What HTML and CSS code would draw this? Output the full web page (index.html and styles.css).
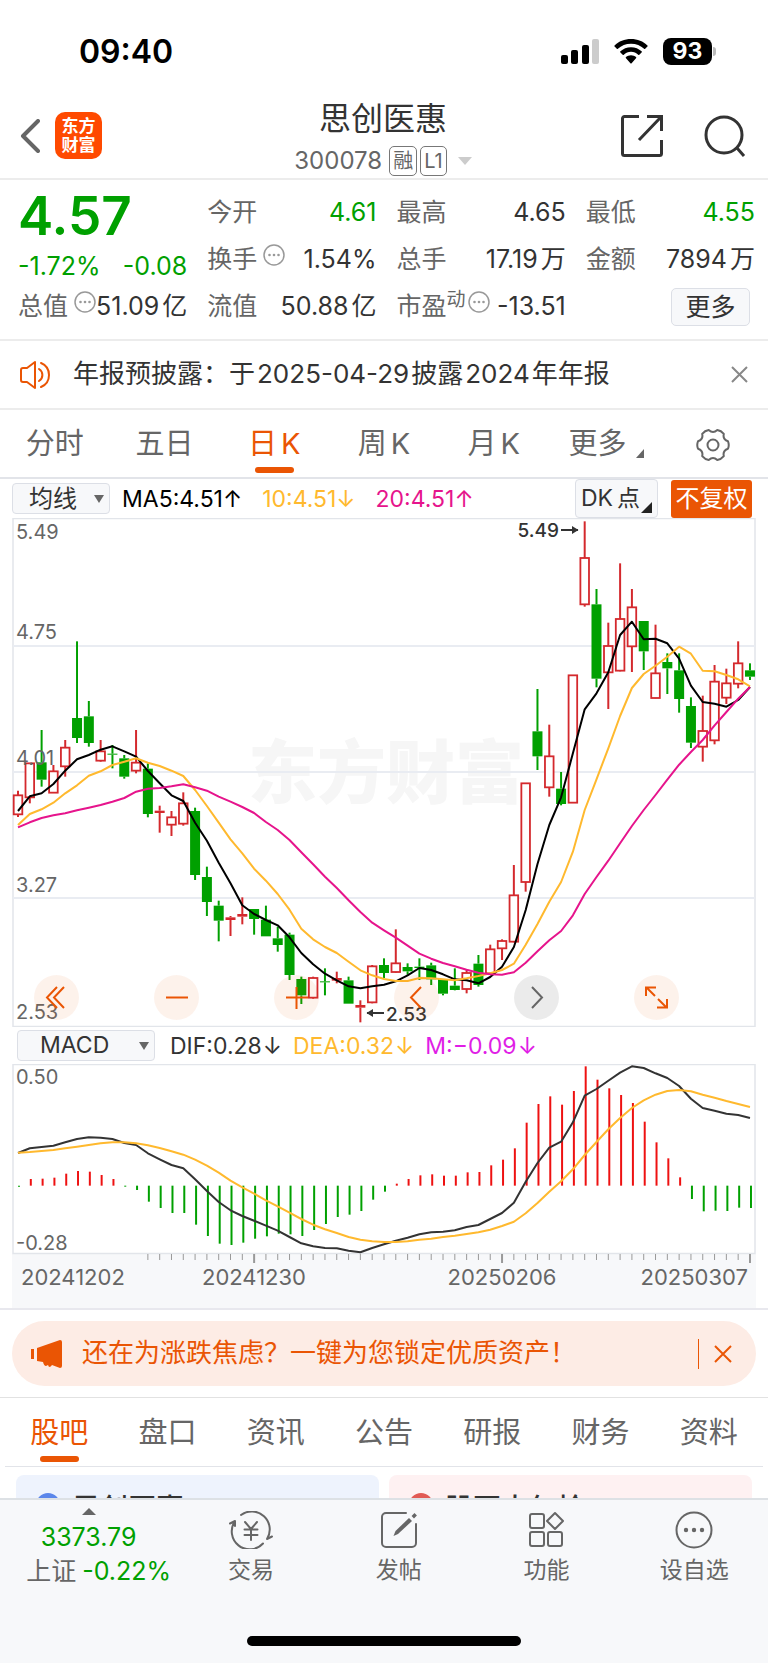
FILE: index.html
```html
<!DOCTYPE html>
<html lang="zh-CN">
<head>
<meta charset="utf-8">
<meta name="viewport" content="width=device-width, initial-scale=1">
<title>思创医惠 300078</title>
<link rel="stylesheet" href="styles.css">
</head>
<body>
<div class="app">
  <main class="content">
    <div class="status">
      <time class="status-time">09:40</time>
      <div class="status-icons">
        <svg width="38" height="25" viewBox="0 0 38 25" aria-label="信号">
          <rect x="0" y="16" width="7" height="9" rx="2"/><rect x="10" y="11" width="7" height="14" rx="2"/>
          <rect x="21" y="6" width="7" height="19" rx="2"/><rect x="31" y="0" width="7" height="25" rx="2" fill="#ccc"/>
        </svg>
        <svg width="34" height="25" viewBox="0 0 34 25" aria-label="Wi-Fi">
          <path d="M17 0C10.500 0 4.700 2.400.6 6.400a.8.8 0 0 0 0 1.200l2.200 2.200a.8.800 0 0 0 1.100 0C7.300 6.600 11.900 4.700 17 4.700s9.700 1.900 13.100 5.100a.8.800 0 0 0 1.100 0l2.200-2.200a.8.800 0 0 0 0-1.200C29.300 2.400 23.500 0 17 0z"/>
          <path d="M17 8.200c-4.100 0-7.900 1.600-10.600 4.100a.8.800 0 0 0 0 1.200l2.300 2.200a.8.800 0 0 0 1.100 0c1.900-1.800 4.400-2.900 7.200-2.900s5.300 1.100 7.200 2.900a.8.800 0 0 0 1.100 0l2.300-2.200a.8.800 0 0 0 0-1.200C24.900 9.800 21.100 8.200 17 8.200z"/>
          <path d="M17 16.200c-1.900 0-3.700.7-5 1.900a.8.800 0 0 0 0 1.200l4.400 4.900a.8.800 0 0 0 1.200 0l4.400-4.900a.8.800 0 0 0 0-1.200c-1.300-1.200-3.100-1.900-5-1.900z"/>
        </svg>
        <div class="battery"><span class="battery-level">93</span><span class="battery-tip"></span></div>
      </div>
    </div>

    <header class="topbar">
      <div class="topbar-left">
        <button class="icon-button" aria-label="返回">
          <svg width="20" height="34" viewBox="0 0 20 34"><path d="M18 2 3 17l15 15" fill="none" stroke="#666" stroke-width="4" stroke-linecap="round" stroke-linejoin="round"/></svg>
        </button>
        <div class="logo"><span>东方</span><span>财富</span></div>
      </div>
      <div class="topbar-title">
        <h1 class="stock-name">思创医惠</h1>
        <div class="stock-code"><span>300078</span><span class="tag tag-first">融</span><span class="tag">L1</span>
          <svg class="code-caret" width="14" height="8" viewBox="0 0 14 8"><path d="M0 0h14L7 8z" fill="#ccc"/></svg>
        </div>
      </div>
      <div class="topbar-right">
        <button class="icon-button" aria-label="分享">
          <svg width="44" height="44" viewBox="0 0 44 44" fill="none" stroke="#333" stroke-width="3"><path d="M19 2.500H4.500a2 2 0 0 0-2 2v35a2 2 0 0 0 2 2h35a2 2 0 0 0 2-2V26M27 2.500h14.500V17M41 3 19 26"/></svg>
        </button>
        <button class="icon-button" aria-label="搜索">
          <svg width="42" height="44" viewBox="0 0 42 44" fill="none" stroke="#333" stroke-width="3"><circle cx="20" cy="21" r="18"/><path d="m33 34 7 8"/></svg>
        </button>
      </div>
    </header>

    <section class="quote">
      <div class="price">4.57</div>
      <div class="field"><span class="name">今开</span><span class="value down">4.61</span></div>
      <div class="field"><span class="name">最高</span><span class="value">4.65</span></div>
      <div class="field"><span class="name">最低</span><span class="value down">4.55</span></div>
      <div class="field change"><span class="value down">-1.72%</span><span class="value down">-0.08</span></div>
      <div class="field"><span class="name">换手</span><svg class="info" viewBox="0 0 22 22"><use href="#info"/></svg><span class="value">1.54%</span></div>
      <div class="field"><span class="name">总手</span><span class="value">17.19<span class="unit">万</span></span></div>
      <div class="field"><span class="name">金额</span><span class="value">7894<span class="unit">万</span></span></div>
      <div class="field"><span class="name">总值</span><svg class="info" viewBox="0 0 22 22"><use href="#info"/></svg><span class="value">51.09<span class="unit">亿</span></span></div>
      <div class="field"><span class="name">流值</span><span class="value">50.88<span class="unit">亿</span></span></div>
      <div class="field"><span class="name">市盈<sup class="dyn">动</sup></span><svg class="info info-tight" viewBox="0 0 22 22"><use href="#info"/></svg><span class="value">-13.51</span></div>
      <div class="field more-cell"><button class="more">更多</button></div>
    </section>

    <section class="notice">
      <svg width="33" height="28" viewBox="0 0 33 28" fill="none" stroke="#ea5504" stroke-width="2" stroke-linejoin="round"><path d="M1 9v10q0 2 2 2h4l8 6V1L7 7H3Q1 7 1 9z"/><path d="M19 8a7 7 0 0 1 0 12M21 2a13 13 0 0 1 0 24" stroke-linecap="round"/></svg>
      <p class="notice-text">年报预披露：于<span class="num">2025-04-29</span>披露<span class="num">2024</span>年年报</p>
      <button class="icon-button" aria-label="关闭公告"><svg width="17" height="17" viewBox="0 0 17 17"><path d="m1 1 15 15M16 1 1 16" stroke="#888" stroke-width="2"/></svg></button>
    </section>

    <nav class="tabs periods">
      <button class="tab">分时</button>
      <button class="tab">五日</button>
      <button class="tab active">日<span class="num-end">K</span></button>
      <button class="tab">周<span class="num-end">K</span></button>
      <button class="tab">月<span class="num-end">K</span></button>
      <button class="tab tab-more">更多<svg class="corner" width="8" height="9" viewBox="0 0 8 9"><path d="M8 0v9H0z" fill="#666"/></svg></button>
      <button class="tab" aria-label="设置">
        <svg width="34" height="34" viewBox="0 0 34 34" fill="none" stroke="#666" stroke-width="2" stroke-linejoin="round"><path d="M32 13.300Q33.500 17 32 20.700 26.500 22.500 27.800 28.100 25.200 31.300 21.300 31.900 17 28 12.700 31.900 8.800 31.300 6.200 28.100 7.500 22.500 2 20.700.5 17 2 13.300 7.500 11.500 6.200 5.900 8.800 2.700 12.700 2.100 17 6 21.300 2.100 25.200 2.700 27.800 5.900 26.500 11.500 32 13.300z"/><circle cx="17" cy="17" r="5.500"/></svg>
      </button>
    </nav>

    <section class="toolbar">
      <label class="picker picker-ma"><select aria-label="主图指标"><option>均线</option></select></label>
      <span class="ma ma5">MA5:4.51↑</span>
      <span class="ma ma10">10:4.51↓</span>
      <span class="ma ma20">20:4.51↑</span>
      <button class="dk">DK<span class="unit">点</span></button>
      <button class="adjust">不复权</button>
    </section>

    <section class="chart">
      <svg id="kline" class="plot" viewBox="0 0 744 509" role="img" aria-label="日K线"></svg>
      <div class="chart-tools">
        <button class="tool" aria-label="最早"><svg viewBox="0 0 45 45"><path d="M23 12 13 22.500 23 33M30 12 20 22.500 30 33"/></svg></button>
        <button class="tool" aria-label="缩小"><svg viewBox="0 0 45 45"><path d="M12 22.500h22"/></svg></button>
        <button class="tool" aria-label="放大"><svg viewBox="0 0 45 45"><path d="M12 22.500h22M22.500 12v22"/></svg></button>
        <button class="tool" aria-label="后退"><svg viewBox="0 0 45 45"><path d="M27 12 17 22.500 27 33"/></svg></button>
        <button class="tool tool-gray" aria-label="前进"><svg viewBox="0 0 45 45"><path d="M18 12l10 10.500L18 33"/></svg></button>
        <button class="tool" aria-label="全屏"><svg viewBox="0 0 45 45"><path d="M12 21v-8.500h10M13 13l8 8M33 24v8.500H23M32 32l-8-8"/></svg></button>
      </div>
    </section>

    <section class="toolbar toolbar-macd">
      <label class="picker picker-macd"><select aria-label="副图指标"><option>MACD</option></select></label>
      <span class="ma dif">DIF:0.28<span class="arrow">↓</span></span>
      <span class="ma ma10">DEA:0.32<span class="arrow">↓</span></span>
      <span class="ma macd">M:−0.09<span class="arrow">↓</span></span>
    </section>

    <section class="chart chart-macd">
      <svg id="macd" class="plot" viewBox="0 0 744 244" role="img" aria-label="MACD"></svg>
    </section>

    <section class="promo-wrap">
      <div class="promo">
        <svg width="31" height="28" viewBox="0 0 31 28" fill="#ea5504"><path d="M0 9h3v10H0zM6 8 29 0q2 0 2 2v24q0 2-2 2l-8-3q-1 2-3 2l-1-2-2 1q-2 0-3-4l-6-1z"/></svg>
        <a class="promo-text" href="#">还在为涨跌焦虑？一键为您锁定优质资产！</a>
        <span class="promo-rule"></span>
        <button class="icon-button" aria-label="关闭"><svg width="18" height="18" viewBox="0 0 18 18"><path d="m1 1 16 16M17 1 1 17" stroke="#ea5504" stroke-width="2"/></svg></button>
      </div>
    </section>

    <nav class="tabs sections">
      <button class="tab active">股吧</button>
      <button class="tab">盘口</button>
      <button class="tab">资讯</button>
      <button class="tab">公告</button>
      <button class="tab">研报</button>
      <button class="tab">财务</button>
      <button class="tab">资料</button>
    </nav>

    <section class="feed">
      <a class="card card-blue" href="#"><span class="dot"></span>思创医惠</a>
      <a class="card card-red" href="#"><span class="dot"></span>股票大年抢</a>
    </section>
  </main>

  <footer class="bottom">
    <div class="bottom-row">
      <a class="index" href="#">
        <svg width="14" height="7" viewBox="0 0 14 7"><path d="M0 7h14L7 0z" fill="#666"/></svg>
        <span class="down">3373.79</span>
        <span class="index-name">上证<span class="down">-0.22%</span></span>
      </a>
      <button class="action">
        <svg width="44" height="38" viewBox="0 0 44 38" fill="none" stroke="#666" stroke-width="2" stroke-linecap="round" stroke-linejoin="round"><path d="M12 4A18 18 0 0 1 38 28l5-2.500M34 32.500A18 18 0 0 1 6 10l-5 2.500M6 10v5"/><path d="m16 11 6 7 6-7M22 18v11M15.500 18.500h13M15.500 24h13"/></svg>
        <span>交易</span>
      </button>
      <button class="action">
        <svg width="38" height="38" viewBox="0 0 38 38" fill="none" stroke="#666" stroke-width="2" stroke-linecap="round"><path d="M26 2H6a4 4 0 0 0-4 4v26a4 4 0 0 0 4 4h26a4 4 0 0 0 4-4V13"/><path d="m13.500 25 2-5L29 7l3 3-14 13z" fill="#666" stroke="none"/><path d="m33 5 1.500-1.500 1 1L34 6z" fill="#666"/></svg>
        <span>发帖</span>
      </button>
      <button class="action">
        <svg width="38" height="38" viewBox="0 0 38 38" fill="none" stroke="#666" stroke-width="2" stroke-linejoin="round"><rect x="3" y="3" width="14" height="14" rx="2"/><rect x="3" y="21" width="14" height="14" rx="2"/><rect x="21" y="21" width="14" height="14" rx="2"/><path d="m28 2 8 8-8 8-8-8z"/></svg>
        <span>功能</span>
      </button>
      <button class="action">
        <svg width="38" height="38" viewBox="0 0 38 38"><circle cx="19" cy="19" r="17.500" fill="none" stroke="#666" stroke-width="2"/><g fill="#666"><circle cx="11" cy="19" r="2.200"/><circle cx="19" cy="19" r="2.200"/><circle cx="27" cy="19" r="2.200"/></g></svg>
        <span>设自选</span>
      </button>
    </div>
    <div class="home-bar"></div>
  </footer>
</div>

<svg width="0" height="0" class="defs" aria-hidden="true">
  <symbol id="info" viewBox="0 0 22 22"><circle cx="11" cy="11" r="10" fill="none" stroke="#999" stroke-width="1.500"/><g fill="#999"><circle cx="6.500" cy="11" r="1.300"/><circle cx="11" cy="11" r="1.300"/><circle cx="15.500" cy="11" r="1.300"/></g></symbol>
</svg>
<script src="chart.js"></script>
</body>
</html>
```

FILE: styles.css
```css
* { box-sizing: border-box; }

body {
  margin: 0;
  background: #fff;
  color: #333;
  font-family: Inter, "Noto Sans CJK SC", sans-serif;
  font-size: 24px;
  line-height: 1.25;
}

button, select {
  margin: 0;
  padding: 0;
  border: 0;
  background: none;
  color: inherit;
  font: inherit;
}

a { color: inherit; text-decoration: none; }
h1, p { margin: 0; font-weight: 400; }
svg { display: block; flex: none; }
.defs { position: absolute; }
.down { color: #00a000; }
.unit, .num-end { margin-left: 4px; }
.num { margin: 0 2px; }
.icon-button { display: flex; }

.app { display: flex; flex-direction: column; height: 100vh; }
.content { flex: 1; min-height: 0; overflow-y: auto; scrollbar-width: none; }

/* status bar */
.status {
  display: flex;
  align-items: center;
  justify-content: space-between;
  height: 91px;
  padding: 12px 52px 0 79px;
  color: #000;
}
.status-time { font-size: 32px; font-weight: 600; }
.status-icons { display: flex; align-items: center; gap: 15px; }
.battery { display: flex; align-items: center; gap: 1px; }
.battery-level {
  width: 49px;
  border-radius: 8px;
  background: #000;
  color: #fff;
  font-size: 23px;
  font-weight: 700;
  line-height: 27px;
  text-align: center;
}
.battery-tip { width: 3px; height: 9px; border-radius: 0 4px 4px 0; background: #bbb; }

/* header */
.topbar {
  display: grid;
  grid-template-columns: 1fr auto 1fr;
  align-items: center;
  height: 89px;
  padding: 2px 22px 0 20px;
  border-bottom: 2px solid #ececec;
}
.topbar-left { display: flex; align-items: center; gap: 15px; }
.logo {
  display: flex;
  flex-direction: column;
  align-items: center;
  justify-content: center;
  width: 47px;
  height: 47px;
  border-radius: 10px;
  background: #ff4a00;
  color: #fff;
  font-size: 17px;
  font-weight: 700;
  line-height: 19px;
}
.topbar-title { display: flex; flex-direction: column; align-items: center; }
.stock-name { font-size: 32px; line-height: 50px; }
.stock-code { display: flex; align-items: center; gap: 3px; color: #666; font-size: 24px; line-height: 34px; }
.tag {
  min-width: 26px;
  padding: 0 3px;
  border: 1px solid #777;
  border-radius: 5px;
  font-size: 20px;
  line-height: 28px;
  text-align: center;
}
.tag-first { margin-left: 4px; }
.code-caret { margin-left: 8px; }
.topbar-right { display: flex; justify-content: flex-end; gap: 40px; }

/* quote */
.quote {
  display: grid;
  grid-template-columns: repeat(4, 1fr);
  grid-auto-rows: 47px;
  column-gap: 20px;
  padding: 9px 13px 9px 18px;
  border-bottom: 2px solid #ececec;
}
.price { color: #00a000; font-size: 53px; font-weight: 600; line-height: 54px; }
.field { display: flex; align-items: center; font-size: 25px; white-space: nowrap; }
.field .name { color: #666; }
.field .value { margin-left: auto; }
.change { padding-top: 14px; }
.change .value:first-child { margin-left: 0; }
.field .unit { margin-left: 3px; }
.info { width: 22px; height: 22px; margin: -10px -5px 0 6px; }
.info-tight { margin: -10px -5px 0 2px; }
.dyn { font-size: 19px; line-height: 1; vertical-align: 9px; }
.more-cell { justify-content: flex-end; padding-right: 5px; }
.more {
  width: 79px;
  height: 38px;
  border: 1px solid #dcdfe6;
  border-radius: 5px;
  background: #f7f8fa;
  line-height: 34px;
}

/* notice */
.notice { display: flex; align-items: center; height: 69px; padding: 0 20px; border-bottom: 2px solid #ececec; }
.notice-text { flex: 1; margin-left: 20px; font-size: 26px; }

/* tabs */
.tabs { display: grid; grid-template-columns: repeat(7, 1fr); height: 69px; border-bottom: 2px solid #e2e4e9; }
.tab {
  position: relative;
  display: flex;
  align-items: center;
  justify-content: center;
  padding-top: 2px;
  color: #666;
  font-size: 29px;
}
.active { color: #ea5504; }
.active::after {
  content: "";
  position: absolute;
  bottom: 4px;
  left: 50%;
  width: 39px;
  height: 6px;
  margin-left: -19px;
  border-radius: 3px;
  background: #ea5504;
}
.tab-more { padding-left: 6px; }
.corner { margin: 18px 0 0 10px; }
.sections { margin: 0 5px; border-bottom-width: 1px; }

/* indicator toolbar */
.toolbar { display: flex; align-items: center; height: 39px; padding: 0 16px 0 12px; white-space: nowrap; }
.picker {
  position: relative;
  display: flex;
  height: 31px;
  border: 1px solid #dcdfe6;
  border-radius: 4px;
  background: #f7f8fa;
}
.picker::after {
  content: "";
  position: absolute;
  top: 11px;
  right: 5px;
  border: 5px solid transparent;
  border-top: 8px solid #666;
  border-bottom: 0;
}
.picker select { width: 100%; padding: 0 20px 0 16px; appearance: none; }
.picker-ma { width: 98px; margin-right: 12px; font-size: 24px; line-height: 29px; }
.picker-macd { width: 138px; margin-right: 15px; font-size: 23px; }
.picker-macd select { padding-left: 22px; }
.ma { margin-right: 20px; padding-top: 2px; font-size: 23px; }
.ma5 { color: #000; }
.ma10 { color: #ffb92e; }
.ma20 { color: #e6148c; }
.macd { color: #e01ee6; }
.arrow { margin-left: 1px; }
.dk {
  position: relative;
  height: 39px;
  width: 83px;
  margin-left: auto;
  padding-right: 12px;
  border: 1px solid #dcdfe6;
  border-radius: 4px;
  background: #f7f8fa;
  font-size: 23px;
}
.dk::after {
  content: "";
  position: absolute;
  right: 5px;
  bottom: 4px;
  border-bottom: 11px solid #222;
  border-left: 11px solid transparent;
}
.adjust { width: 81px; height: 38px; margin-left: 13px; border-radius: 3px; background: #ea5504; color: #fff; font-size: 24px; }
.toolbar-macd { height: 37px; padding-left: 17px; }
.toolbar-macd .ma { margin-right: 11px; }

/* charts */
.chart { position: relative; padding: 0 12px; }
.chart-macd { border-bottom: 2px solid #e8e8ee; }
.plot { width: 100%; height: auto; }
.plot text { fill: #666; font-size: 20px; }
.plot .date { font-size: 22px; }
.plot .note { fill: #333; font-size: 19px; font-weight: 500; }
.plot .watermark { fill: #f6f6f6; font-size: 69px; font-weight: 900; }
.chart-tools {
  position: absolute;
  right: 89px;
  bottom: 7px;
  left: 34px;
  display: flex;
  justify-content: space-between;
}
.tool { width: 45px; height: 45px; border-radius: 50%; background: rgba(234, 85, 4, .08); }
.tool path { fill: none; stroke: #ea5504; stroke-width: 2; }
.tool-gray { background: rgba(0, 0, 0, .08); }
.tool-gray path { stroke: #666; }

/* promo */
.promo-wrap { padding: 11px 12px; border-bottom: 1px solid #e2e2e2; }
.promo {
  display: flex;
  align-items: center;
  height: 65px;
  padding: 0 24px 0 19px;
  border-radius: 33px;
  background: #fdece5;
  color: #ea5504;
}
.promo-text { flex: 1; margin-left: 20px; font-size: 26px; }
.promo-rule { width: 1px; height: 30px; margin-right: 15px; background: #ea5504; }

/* feed */
.feed { display: grid; grid-template-columns: 1fr 1fr; gap: 10px; padding: 8px 16px 20px; }
.card {
  display: flex;
  align-items: flex-start;
  gap: 12px;
  height: 120px;
  padding: 16px 20px;
  border-radius: 8px;
  font-size: 28px;
  font-weight: 500;
  line-height: 36px;
}
.card-blue { background: #eef3fd; }
.card-red { background: #fef1f2; }
.dot { width: 24px; height: 24px; margin-top: 2px; border-radius: 50%; background: #5b86ea; }
.card-red .dot { background: #e15a54; }

/* bottom bar */
.bottom { flex: none; height: 165px; border-top: 2px solid #dde1e5; background: #f7f8fa; color: #666; }
.bottom-row { display: grid; grid-template-columns: 6fr 5fr 5fr 5fr 5fr; height: 136px; }
.index { display: flex; flex-direction: column; align-items: center; padding-top: 8px; font-size: 25px; line-height: 34px; }
.index > .down { margin-top: 5px; }
.index-name { padding-left: 20px; }
.index-name .down { margin-left: 6px; }
.action { display: flex; flex-direction: column; align-items: center; padding-top: 11px; font-size: 23px; line-height: 30px; }
.action span { margin-top: 6px; }
.home-bar { width: 274px; height: 10px; margin: 0 auto; border-radius: 5px; background: #000; }
```

FILE: chart.js
```js
const STEP = 11.806;
const xAt = (i) => 6 + STEP * i;

// Each candle: direction, high, body top, body bottom, low (thirds of a unit, downward).
const candles = [
  ["r",842,856,913,921],["r",760,760,862,880],["g",660,757,809,830],["r",765,784,848,848],
  ["r",690,713,769,800],["g",394,624,684,699],["g",573,619,699,710],["r",690,724,752,755],
  ["g",705,731,734,775],["g",735,745,800,806],["r",660,758,782,790],["g",760,776,912,922],
  ["r",887,902,909,968],["r",903,922,944,978],["r",847,880,941,947],["g",893,903,1095,1110],
  ["g",1070,1101,1176,1218],["g",1172,1187,1232,1294],["r",1218,1222,1230,1278],["r",1162,1212,1220,1243],
  ["g",1197,1197,1227,1274],["g",1187,1229,1279,1279],["g",1250,1285,1305,1325],["g",1268,1274,1395,1410],
  ["g",1400,1407,1456,1482],["r",1400,1404,1463,1466],["g",1375,1414,1417,1456],["r",1385,1404,1412,1420],
  ["g",1400,1411,1481,1481],["r",1471,1485,1493,1537],["r",1365,1369,1477,1480],["g",1345,1365,1389,1404],
  ["r",1258,1360,1386,1388],["g",1360,1371,1384,1394],["g",1345,1370,1374,1410],["g",1358,1366,1408,1425],
  ["g",1407,1407,1451,1456],["g",1375,1427,1440,1441],["r",1378,1389,1437,1450],["g",1335,1361,1425,1430],
  ["r",1304,1318,1390,1395],["r",1288,1293,1315,1350],["r",1065,1156,1295,1297],["r",820,820,1116,1145],
  ["g",537,664,739,780],["r",644,739,832,860],["g",786,836,882,886],["r",496,496,878,878],
  ["r",34,144,283,290],["g",237,283,506,532],["r",338,408,487,597],["r",160,327,482,484],
  ["r",237,292,409,486],["g",333,333,424,480],["r",344,490,564,565],["g",430,456,475,552],
  ["g",430,481,567,608],["g",562,588,698,714],["r",557,663,710,755],["r",465,515,691,703],
  ["r",476,520,563,582],["r",394,460,521,535],["g",460,481,500,510]
];
const ma5 = [903,859,850,822,782,748,735,719,709,724,740,783,820,856,873,938,992,1058,1120,1186,1212,1230,1246,1282,1329,1363,1391,1411,1429,1435,1429,1424,1414,1396,1374,1380,1393,1408,1411,1420,1401,1370,1311,1200,1062,945,862,730,598,550,487,375,335,388,386,400,446,527,576,581,590,570,531];
const ma10 = [945,912,898,878,850,826,797,784,765,755,745,758,768,782,798,840,888,938,988,1030,1076,1112,1152,1199,1256,1288,1311,1329,1355,1381,1396,1407,1413,1413,1404,1405,1408,1411,1405,1398,1390,1380,1361,1304,1242,1175,1116,1025,900,808,715,618,534,492,467,440,410,431,482,484,495,508,529];
const ma20 = [952,937,924,916,910,901,893,885,875,864,845,836,834,829,823,832,842,860,875,891,909,936,960,990,1027,1063,1100,1134,1171,1206,1238,1261,1283,1307,1331,1346,1359,1369,1379,1388,1393,1394,1387,1358,1324,1291,1263,1216,1152,1101,1052,1000,948,900,855,809,764,726,690,646,606,566,531];
const hist = [500,477,476,473,461,453,455,465,477,500,510,545,564,579,579,614,648,671,675,668,656,649,641,643,648,630,612,591,584,573,539,515,491,477,466,463,467,467,457,456,436,419,385,308,252,229,254,213,139,179,205,225,249,305,367,415,472,537,574,572,573,563,564];
const dif = [399,385,381,377,367,357,352,353,357,369,375,400,418,435,445,478,513,546,571,588,602,617,632,651,670,679,684,685,692,697,684,673,662,653,643,637,635,631,621,615,597,579,548,485,429,383,365,307,227,207,182,158,139,144,160,174,198,236,264,272,281,285,294];
const dea = [398,396,393,390,385,380,375,370,367,367,370,376,384,394,404,419,437,458,482,502,521,541,559,578,597,614,628,639,651,659,664,666,666,664,659,656,651,647,642,637,629,618,605,580,549,515,484,448,405,366,328,294,264,241,224,213,210,214,224,233,243,252,261];

const polyline = (values, y, color) =>
  `<polyline fill="none" stroke="${color}" stroke-width="2" stroke-linejoin="round" points="${values.map((v, i) => xAt(i).toFixed(1) + "," + y(v).toFixed(1)).join(" ")}"/>`;
const line = (x1, y1, x2, y2, color, width) =>
  `<line x1="${x1}" y1="${y1}" x2="${x2}" y2="${y2}" stroke="${color}" stroke-width="${width}"/>`;
const label = (x, y, text, cls = "", anchor = "start") =>
  `<text x="${x}" y="${y}" class="${cls}" text-anchor="${anchor}">${text}</text>`;

function drawKline() {
  const y = (v) => v / 3 - 8;
  let out = label(374, 280, "东方财富", "watermark", "middle");
  out += '<rect x="1" y="0.5" width="742" height="508" fill="none" stroke="#e2e5ea" stroke-width="1.5"/>';
  for (const g of [128, 254, 380]) out += line(1, g, 743, g, "#e9ecf2", 2);
  candles.forEach(([dir, high, top, bottom, low], i) => {
    const x = xAt(i);
    const color = dir === "r" ? "#d4292d" : "#00a000";
    out += line(x, y(high), x, y(top), color, 2) + line(x, y(bottom), x, y(low), color, 2);
    const h = Math.max(y(bottom) - y(top), 1);
    out += dir === "r" && h > 3
      ? `<rect x="${x - 4.3}" y="${y(top)}" width="8.6" height="${h}" fill="#fff" stroke="${color}" stroke-width="1.8"/>`
      : `<rect x="${x - 5}" y="${y(top)}" width="10" height="${h}" fill="${color}"/>`;
  });
  out += polyline(ma5, y, "#000") + polyline(ma10, y, "#ffb92e") + polyline(ma20, y, "#e6148c");
  [["5.49", 21], ["4.75", 121], ["4.01", 247], ["3.27", 374], ["2.53", 501]].forEach(([t, p]) => { out += label(4, p, t); });
  out += label(547, 19, "5.49", "note", "end") + label(374, 503, "2.53", "note");
  out += line(549, 12, 566, 12, "#333", 2) + '<path d="m560 8 6.500 4-6.500 4z" fill="#333"/>';
  out += line(355, 495, 372, 495, "#333", 2) + '<path d="m361 491-6.500 4 6.500 4z" fill="#333"/>';
  document.getElementById("kline").innerHTML = out;
}

function drawMacd() {
  const y = (v) => v / 3 - 44;
  let out = '<rect x="0" y="190" width="744" height="54" fill="#f7f8fa"/>';
  out += '<rect x="1" y="0.5" width="742" height="189" fill="none" stroke="#e2e5ea" stroke-width="1.5"/>';
  hist.forEach((v, i) => {
    out += line(xAt(i) + 1, y(497), xAt(i) + 1, y(v), v < 497 ? "#ee1111" : "#00a000", 2);
  });
  out += polyline(dif, y, "#333") + polyline(dea, y, "#ffb92e");
  for (let i = 11; i <= 62; i++) {
    const major = i === 20 || i === 41 || i === 62;
    out += line(xAt(i), 190, xAt(i), major ? 199 : 196, "#999", major ? 2 : 1);
  }
  out += label(4, 20, "0.50") + label(4, 186, "-0.28");
  out += label(9, 221, "20241202", "date") + label(242, 221, "20241230", "date", "middle");
  out += label(490, 221, "20250206", "date", "middle") + label(736, 221, "20250307", "date", "end");
  document.getElementById("macd").innerHTML = out;
}

drawKline();
drawMacd();
```
